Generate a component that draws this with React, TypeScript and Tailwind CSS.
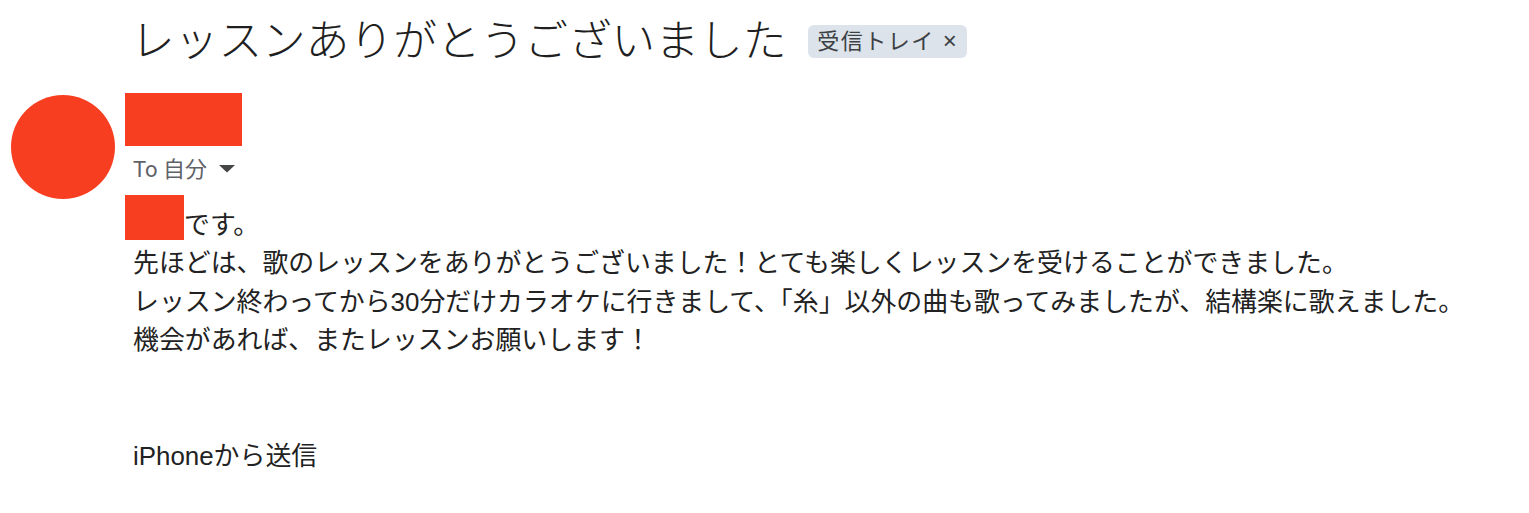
const jp = "font-['Liberation_Sans','Noto_Sans_CJK_JP',sans-serif]";

const lines = [
  "先ほどは、歌のレッスンをありがとうございました！とても楽しくレッスンを受けることができました。",
  "レッスン終わってから30分だけカラオケに行きまして、「糸」以外の曲も歌ってみましたが、結構楽に歌えました。",
  "機会があれば、またレッスンお願いします！",
  "",
  "",
  "iPhoneから送信",
];

export default function App() {
  return (
    <div className={`w-[1529px] h-[513px] bg-white overflow-hidden ${jp}`}>
      {/* subject */}
      <div className="flex items-center h-[82px] pl-[131px]">
        <h1 className="text-[43.7px] font-light text-[#1f1f1f] leading-none">
          レッスンありがとうございました
        </h1>
        <span className="ml-[22px] flex items-center h-[33px] px-[9px] rounded-[6px] bg-[#dde3ea] text-[22px] tracking-[1.5px] text-[#3c4043]">
          受信トレイ
          <span className="ml-[8px] text-[24px] leading-none">×</span>
        </span>
      </div>

      {/* sender */}
      <div className="flex mt-[11px]">
        <div className="w-[125px] shrink-0 pl-[11px] pt-[2px]">
          <div className="w-[104px] h-[104px] rounded-full bg-[#f83e21]" />
        </div>
        <div className="flex flex-col">
          <div className="w-[117px] h-[53px] bg-[#f83e21]" />
          <div className="flex items-center mt-[11px] h-[24px] pl-2 text-[22px] text-[#5f6368] font-['Roboto','Noto_Sans_CJK_JP',sans-serif]">
            To 自分
            <svg className="ml-[12px]" width="16" height="8" viewBox="0 0 16 8">
              <path d="M0 0h16L8 7.5z" fill="#444746" />
            </svg>
          </div>

          {/* body */}
          <div className="flex items-end mt-[14px] text-[25.9px] text-[#222]">
            <div className="w-[59px] h-[45px] bg-[#f83e21]" />
            <span className="leading-[38px] -mb-[4px]">です。</span>
          </div>
          <div className="mt-[4px] pl-2 text-[25.9px] leading-[38.5px] text-[#222] whitespace-nowrap">
            {lines.map((l, i) => (
              <div key={i} className="h-[38.5px]">
                {l}
              </div>
            ))}
          </div>
        </div>
      </div>
    </div>
  );
}
